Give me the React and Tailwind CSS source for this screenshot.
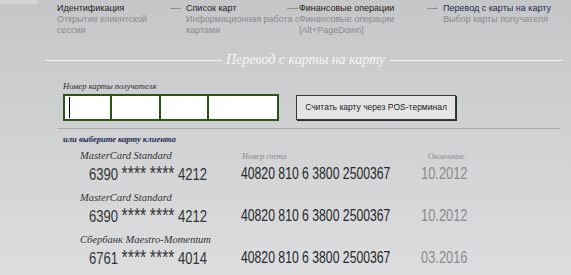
import React from "react";

const sans = { fontFamily: '"Liberation Sans", Arial, sans-serif' };
const serif = { fontFamily: '"Liberation Serif", "DejaVu Serif", serif' };

function Arrow() {
  return (
    <svg width="12" height="11" viewBox="0 0 12 11" className="shrink-0">
      <line x1="0" y1="5.5" x2="11" y2="5.5" stroke="#8e8e8e" strokeWidth="1" />
      <line x1="8" y1="5" x2="11" y2="5.5" stroke="#8e8e8e" strokeWidth="1" />
    </svg>
  );
}

function Step({ title, lines, titleClass, width, arrow, arrowWidth }) {
  return (
    <div className="flex shrink-0">
      {arrow && (
        <div className={`${arrowWidth} flex items-start`}>
          <Arrow />
        </div>
      )}
      <div className={`${width} text-[9px] leading-[11px] whitespace-nowrap`} style={sans}>
        <div className={titleClass}>{title}</div>
        {lines.map((l, i) => (
          <div key={i} className="text-[#8a8b8d]">
            {l}
          </div>
        ))}
      </div>
    </div>
  );
}

function Num({ text, className, scale }) {
  const parts = text.split(/(\*\*\*\*)/);
  return (
    <span className={`inline-block origin-left whitespace-nowrap ${scale} ${className}`}>
      {parts.map((p, i) =>
        p === "****" ? (
          <span key={i} className="text-[20px]">
            {p}
          </span>
        ) : (
          <span key={i}>{p}</span>
        )
      )}
    </span>
  );
}

const cards = [
  { name: "MasterCard Standard", num: "6390 **** **** 4212", acc: "40820 810 6 3800 2500367", date: "10.2012", head: true },
  { name: "MasterCard Standard", num: "6390 **** **** 4212", acc: "40820 810 6 3800 2500367", date: "10.2012" },
  { name: "Сбербанк Maestro-Momentum", num: "6761 **** **** 4014", acc: "40820 810 6 3800 2500367", date: "03.2016" },
];

export default function App() {
  return (
    <div className="relative w-[571px] h-[275px] overflow-hidden bg-gradient-to-b from-[#c5c6c8] to-[#dcdddf]">
      <div className="absolute left-0 top-0 w-[38px] h-[4px] bg-[#d4d5d7]" />
      {/* steps */}
      <div className="flex pl-[57px] pt-[3px]">
        <Step title="Идентификация" titleClass="text-[#1e1e1e]" lines={["Открытие клиентской", "сессии"]} width="w-[113px]" />
        <Step arrow arrowWidth="w-[16px]" title="Список карт" titleClass="text-[#1e1e1e]" lines={["Информационная работа с", "картами"]} width="w-[101px]" />
        <Step arrow arrowWidth="w-[12px]" title="Финансовые операции" titleClass="text-[#2a1c10]" lines={["Финансовые операции", "[Alt+PageDown]"]} width="w-[128px]" />
        <Step arrow arrowWidth="w-[16px]" title="Перевод с карты на карту" titleClass="text-[#1b2a52]" lines={["Выбор карты получателя"]} width="w-[120px]" />
      </div>

      {/* header */}
      <div className="flex items-center mt-[14px] h-[20px] pl-[45px] pr-[8px]">
        <div className="w-[177px] h-px bg-[#f4f4f4]" />
        <div className="px-[4px] text-[14px] leading-[20px] italic text-[#f6f6f6] whitespace-nowrap" style={serif}>
          Перевод с карты на карту
        </div>
        <div className="flex-1 h-px bg-[#f4f4f4]" />
      </div>

      {/* recipient */}
      <div className="pl-[63px] mt-[11px] text-[8.5px] leading-[10px] italic text-[#2a2a2a]" style={serif}>
        Номер карты получателя
      </div>
      <div className="flex items-center mt-[3px] pl-[63px]">
        <div className="flex w-[216px] h-[27px] border-2 border-[#2b5316] bg-white">
          <div className="relative w-[47px] border-r-2 border-[#2b5316]">
            <div className="absolute left-[4px] top-[1px] w-px h-[21px] bg-black" />
          </div>
          <div className="w-[49px] border-r-2 border-[#2b5316]" />
          <div className="w-[48px] border-r-2 border-[#2b5316]" />
          <div className="flex-1" />
        </div>
        <button
          className="ml-[17px] w-[160px] h-[25px] bg-[#e4e4e5] border border-[#3a3a3a] shadow-[1px_1px_0_#2a2a2a] text-[8.5px] text-[#222] flex items-center justify-center whitespace-nowrap"
          style={sans}
        >
          Считать карту через POS-терминал
        </button>
      </div>

      <div className="ml-[57px] mr-[11px] mt-[7px] h-px bg-[#a9aaac]" />

      <div className="pl-[63px] mt-[5px] text-[8.5px] leading-[10px] italic font-bold text-[#1f2a52]" style={serif}>
        или выберите карту клиента
      </div>

      <div className="flex flex-col gap-[9px] mt-[6px] pl-[80px]">
        {cards.map((c, i) => (
          <div key={i} className="flex flex-col gap-[1px]">
            <div className="flex h-[12px] items-end whitespace-nowrap">
              <div className="w-[162px] text-[10.5px] leading-[12px] italic text-[#333]" style={serif}>
                {c.name}
              </div>
              {c.head && (
                <>
                  <div className="w-[186px] text-[8px] leading-[10px] italic text-[#8a8b8d]" style={serif}>
                    Номер счета
                  </div>
                  <div className="text-[8px] leading-[10px] italic text-[#8a8b8d]" style={serif}>
                    Окончание
                  </div>
                </>
              )}
            </div>
            <div className="flex pl-[9px] h-[20px] items-center text-[16.5px] leading-[20px]" style={sans}>
              <div className="w-[152px] h-[20px]">
                <Num text={c.num} className="text-[#333]" scale="scale-x-[0.79]" />
              </div>
              <div className="w-[180px] h-[20px]">
                <Num text={c.acc} className="text-[#262626]" scale="scale-x-[0.74]" />
              </div>
              <div className="h-[20px]">
                <Num text={c.date} className="text-[#8a8b8d]" scale="scale-x-[0.78]" />
              </div>
            </div>
          </div>
        ))}
      </div>
    </div>
  );
}
